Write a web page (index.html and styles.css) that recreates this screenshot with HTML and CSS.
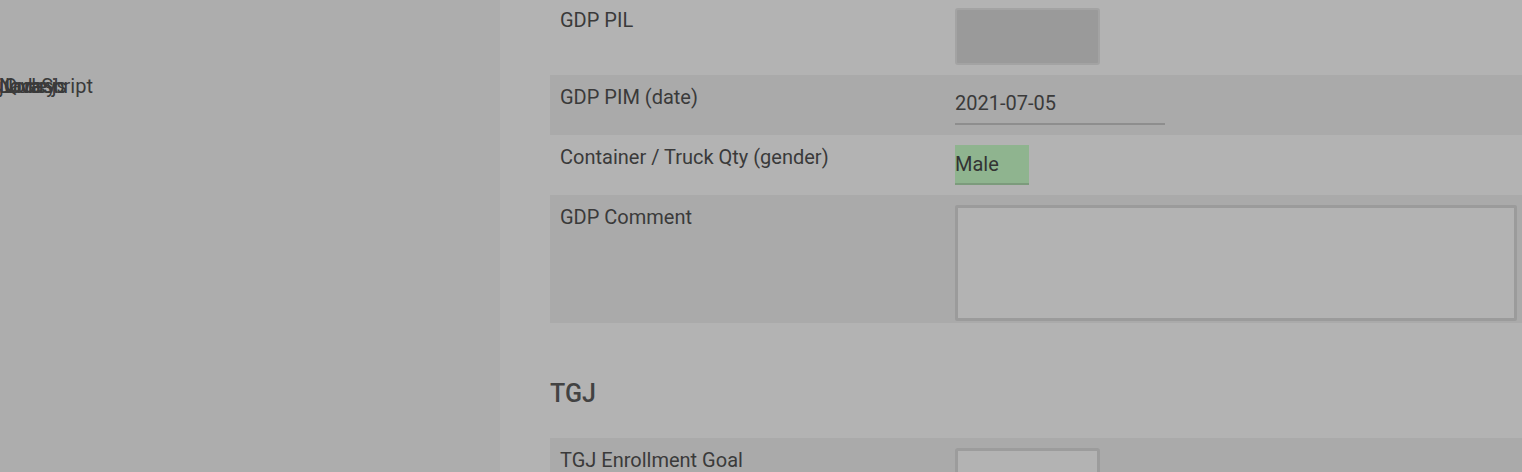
FILE: index.html
```html
<!DOCTYPE html>
<html lang="en">
<head>
<meta charset="utf-8">
<title>Form</title>
<link rel="stylesheet" href="styles.css">
</head>
<body>
<aside class="sidebar">
  <div class="stack">
    <span class="word">Node.js</span>
    <span class="word">Lodash</span>
    <span class="word">jQuery</span>
    <span class="word">JavaScript</span>
  </div>
</aside>
<main class="main">
  <div class="row row-first">
    <div class="label">GDP PIL</div>
    <div class="field"><div class="box-disabled"></div></div>
  </div>
  <div class="row row-alt">
    <div class="label">GDP PIM (date)</div>
    <div class="field"><div class="date-input">2021-07-05</div></div>
  </div>
  <div class="row">
    <div class="label">Container / Truck Qty (gender)</div>
    <div class="field"><div class="select-green">Male</div></div>
  </div>
  <div class="row row-alt row-textarea">
    <div class="label">GDP Comment</div>
    <div class="field"><div class="textarea"></div></div>
  </div>
  <h3 class="section-title">TGJ</h3>
  <div class="row row-alt">
    <div class="label">TGJ Enrollment Goal</div>
    <div class="field"><div class="box-empty"></div></div>
  </div>
</main>
</body>
</html>
```
FILE: styles.css
```css
html, body {
  margin: 0;
  padding: 0;
  height: 100%;
  overflow: hidden;
}
body {
  display: flex;
  font-family: Roboto, "Liberation Sans", sans-serif;
  font-size: 20px;
  color: #3a3a3a;
  background: #b3b3b3;
}
.sidebar {
  width: 500px;
  flex: 0 0 500px;
  background: #adadad;
  height: 100vh;
  padding-top: 74px;
  box-sizing: border-box;
}
.stack {
  display: grid;
  line-height: 24px;
  margin-left: -1px;
}
.word {
  grid-area: 1 / 1;
}
.main {
  flex: 1;
  padding-left: 50px;
  margin-top: -2px;
  min-width: 0;
}
.row {
  display: grid;
  grid-template-columns: 395px 1fr;
  padding: 10px;
  line-height: 24px;
}
.row-alt {
  background: #aaaaaa;
}
.row-textarea {
  padding-bottom: 2px;
}
.label {
  color: #3a3a3a;
}
.box-disabled {
  width: 145px;
  height: 57px;
  box-sizing: border-box;
  background: #9a9a9a;
  border: 2px solid #a3a3a3;
  border-radius: 3px;
}
.date-input {
  width: 210px;
  height: 40px;
  box-sizing: border-box;
  border-bottom: 2px solid #8e8e8e;
  padding-top: 6px;
  color: #3a3a3a;
}
.select-green {
  width: 74px;
  height: 40px;
  box-sizing: border-box;
  background: #8fb48f;
  border-bottom: 2px solid #7c9b7c;
  padding-top: 7px;
  color: #333;
}
.textarea {
  width: 562px;
  height: 116px;
  box-sizing: border-box;
  border: 3px solid #9b9b9b;
  border-radius: 2px;
  background: #b3b3b3;
}
.section-title {
  margin: 57px 0 29px;
  font-size: 25px;
  font-weight: 500;
  line-height: 28.8px;
  color: #424242;
}
.box-empty {
  width: 145px;
  height: 57px;
  box-sizing: border-box;
  border: 3px solid #9c9c9c;
  border-radius: 3px;
  background: #b3b3b3;
}
```
